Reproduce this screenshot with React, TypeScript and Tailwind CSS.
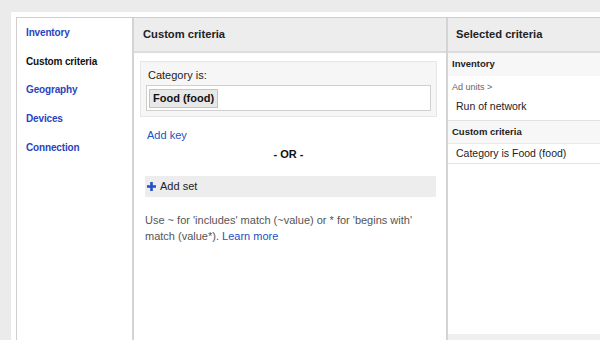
import React from 'react';

const navItems = [
  { label: 'Inventory', active: false },
  { label: 'Custom criteria', active: true },
  { label: 'Geography', active: false },
  { label: 'Devices', active: false },
  { label: 'Connection', active: false },
];

export default function App() {
  return (
    <div className="h-[340px] overflow-hidden bg-[#ebebeb] pl-[11px] pt-[12px] font-['Liberation_Sans',Arial,sans-serif]">
      <div className="h-[400px] bg-white pl-[5px] pt-[5px]">
        <div className="flex h-full border-l border-t border-[#cfcfcf]">
          {/* Left nav */}
          <nav className="flex w-[117px] shrink-0 flex-col border-r-2 border-[#d4d4d4] pl-[9px] pt-[8px]">
            {navItems.map((item) => (
              <a
                key={item.label}
                className={`h-[28.7px] text-[10px] font-bold leading-[14px] tracking-[-0.15px] ${item.active ? 'text-[#111]' : 'text-[#2a44c0]'}`}
              >
                {item.label}
              </a>
            ))}
          </nav>

          {/* Middle panel */}
          <section className="flex w-[314px] shrink-0 flex-col border-r-2 border-[#d4d4d4]">
            <div className="flex h-[35px] items-center border-b-2 border-[#dcdcdc] bg-[#ededed] pl-[9px] text-[11.2px] font-bold text-[#222]">
              Custom criteria
            </div>
            <div className="pl-[6px] pr-[9px] pt-[8px]">
              <div className="border border-[#e6e6e6] bg-[#f6f6f6] px-[5px] pb-[5px] pt-[6px]">
                <div className="pl-[2px] text-[11px] leading-[14px] text-[#222]">Category is:</div>
                <div className="mt-[3px] flex h-[26px] items-center border border-[#cfcfcf] bg-white px-[2px]">
                  <span className="flex h-[19px] items-center border border-[#c4c4c4] bg-[#e8e8e8] px-[3px] text-[11px] font-bold text-[#111]">
                    Food (food)
                  </span>
                </div>
              </div>
              <a className="mt-[11px] block pl-[7px] text-[11px] leading-[14px] text-[#2151c4]">Add key</a>
              <div className="mt-[5px] text-center text-[11px] font-bold leading-[14px] text-[#111]">- OR -</div>
              <div className="ml-[5px] mr-[1px] mt-[15px] flex h-[21px] items-center gap-[4px] bg-[#ededed] pl-[2px] text-[11px] text-[#222]">
                <svg width="9" height="9" viewBox="0 0 9 9">
                  <path d="M3.2 0h2.6v3.2H9v2.6H5.8V9H3.2V5.8H0V3.2h3.2z" fill="#2151c4" />
                </svg>
                Add set
              </div>
              <p className="ml-[5px] mt-[15px] text-[11px] leading-[16px] text-[#555]">
                Use ~ for 'includes' match (~value) or * for 'begins with'
                <br />
                match (value*). <a className="text-[#2151c4]">Learn more</a>
              </p>
            </div>
          </section>

          {/* Right panel */}
          <section className="flex flex-1 flex-col">
            <div className="flex h-[35px] items-center border-b-2 border-[#dcdcdc] bg-[#ededed] pl-[8px] text-[11.2px] font-bold text-[#222]">
              Selected criteria
            </div>
            <div className="flex h-[23px] items-center bg-[#f7f7f7] pl-[4px] text-[9.5px] font-bold text-[#222]">
              Inventory
            </div>
            <div className="pl-[4px] pt-[5px] text-[9px] leading-[12px] text-[#666]">Ad units &gt;</div>
            <div className="flex h-[28px] items-center border-b border-[#e2e2e2] pl-[8px] text-[10.5px] text-[#222]">
              Run of network
            </div>
            <div className="flex h-[23px] items-center border-b border-[#eaeaea] bg-[#f7f7f7] pl-[4px] text-[9.5px] font-bold text-[#222]">
              Custom criteria
            </div>
            <div className="flex h-[20px] items-center border-b border-[#e2e2e2] pl-[8px] text-[10.5px] text-[#222]">
              Category is Food (food)
            </div>
            <div className="h-[170px]" />
            <div className="flex-1 bg-[#efefef]" />
          </section>
        </div>
      </div>
    </div>
  );
}
